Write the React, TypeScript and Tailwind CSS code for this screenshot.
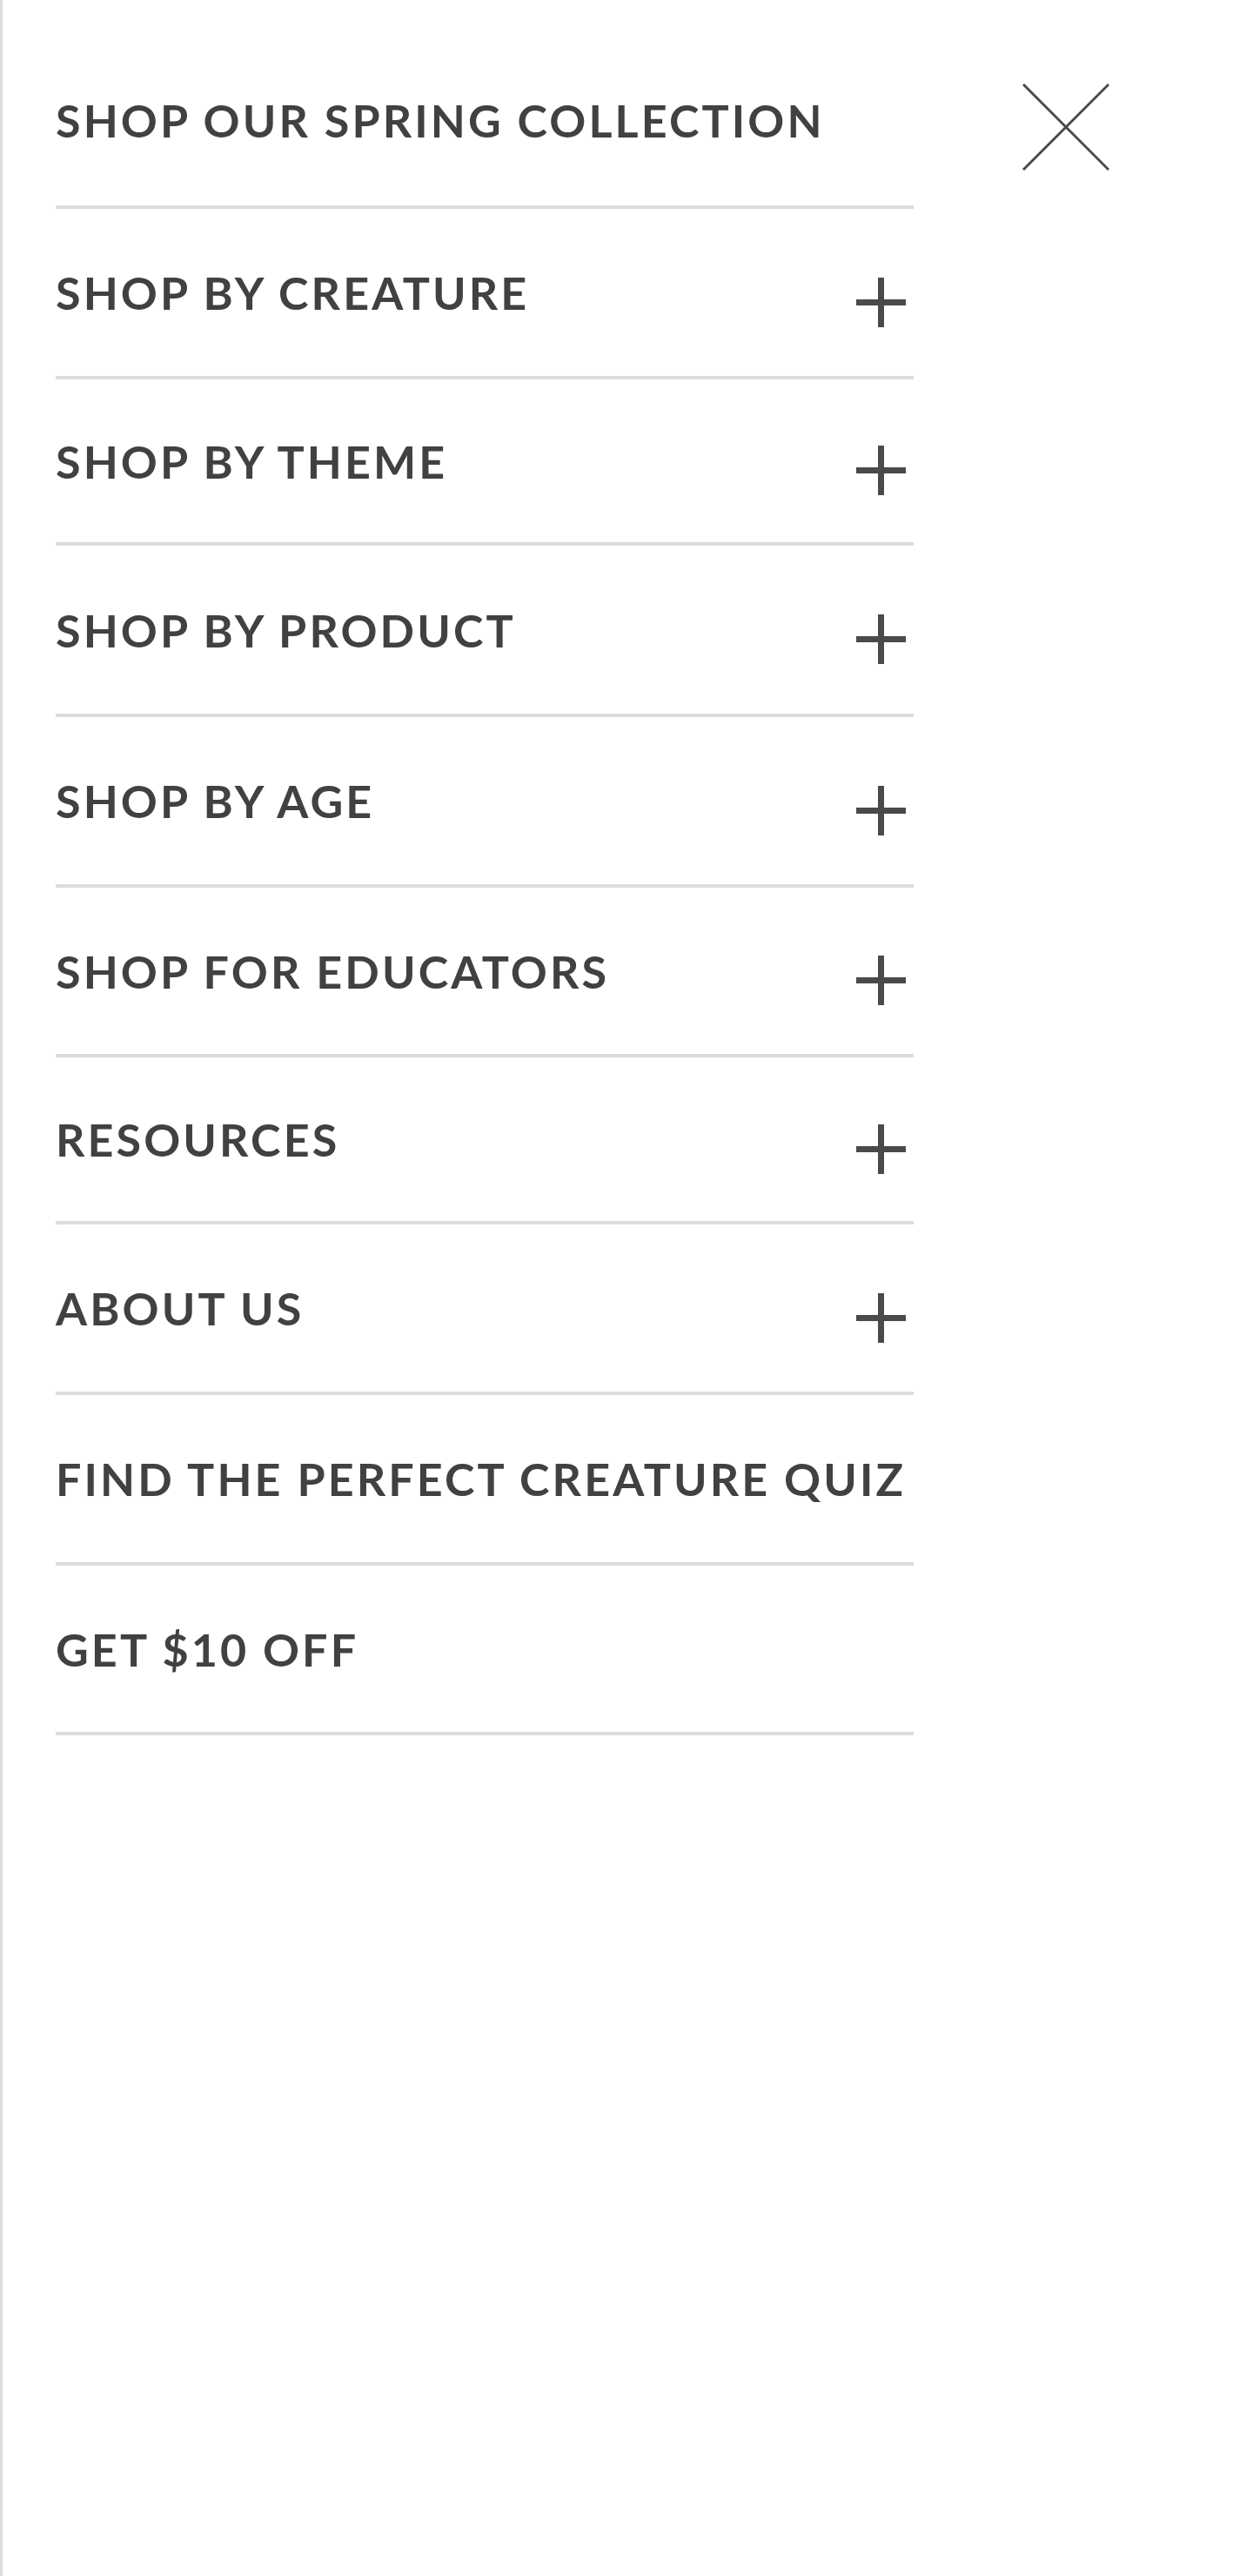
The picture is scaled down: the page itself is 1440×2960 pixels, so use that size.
import React from "react";

type NavItem = {
  label: string;
  expandable: boolean;
  height: string;
};

const items: NavItem[] = [
  { label: "SHOP OUR SPRING COLLECTION", expandable: false, height: "h-[200px]" },
  { label: "SHOP BY CREATURE", expandable: true, height: "h-[196px]" },
  { label: "SHOP BY THEME", expandable: true, height: "h-[191px]" },
  { label: "SHOP BY PRODUCT", expandable: true, height: "h-[197px]" },
  { label: "SHOP BY AGE", expandable: true, height: "h-[196px]" },
  { label: "SHOP FOR EDUCATORS", expandable: true, height: "h-[195px]" },
  { label: "RESOURCES", expandable: true, height: "h-[192px]" },
  { label: "ABOUT US", expandable: true, height: "h-[196px]" },
  { label: "FIND THE PERFECT CREATURE QUIZ", expandable: false, height: "h-[196px]" },
  { label: "GET $10 OFF", expandable: false, height: "h-[195px]" },
];

function PlusIcon() {
  return (
    <svg width="57" height="57" viewBox="0 0 57 57" className="mt-[22px] mr-[9px] shrink-0">
      <rect x="0" y="25" width="57" height="7" fill="#4a4a4a" />
      <rect x="25" y="0" width="7" height="57" fill="#4a4a4a" />
    </svg>
  );
}

function CloseIcon() {
  return (
    <svg width="100" height="100" viewBox="0 0 100 100">
      <path d="M1 1 L99 99 M99 1 L1 99" stroke="#4a4a4a" strokeWidth="3" fill="none" />
    </svg>
  );
}

export default function App() {
  return (
    <div
      className="min-h-[2960px] w-[1440px] bg-white border-l-[3px] border-[#dcdcdc] flex"
      style={{ fontFamily: "Lato, 'Liberation Sans', sans-serif" }}
    >
      {/* Menu list */}
      <nav className="ml-[61px] w-[986px] pt-[40px]">
        {items.map((item) => (
          <div
            key={item.label}
            className={`${item.height} flex items-center justify-between border-b-4 border-[#dcdcdc]`}
          >
            <span className="text-[52px] leading-none font-bold tracking-[0.06em] text-[#414141] whitespace-nowrap">
              {item.label}
            </span>
            {item.expandable && <PlusIcon />}
          </div>
        ))}
      </nav>

      {/* Close */}
      <button className="ml-[125px] mt-[96px] self-start">
        <CloseIcon />
      </button>
    </div>
  );
}
